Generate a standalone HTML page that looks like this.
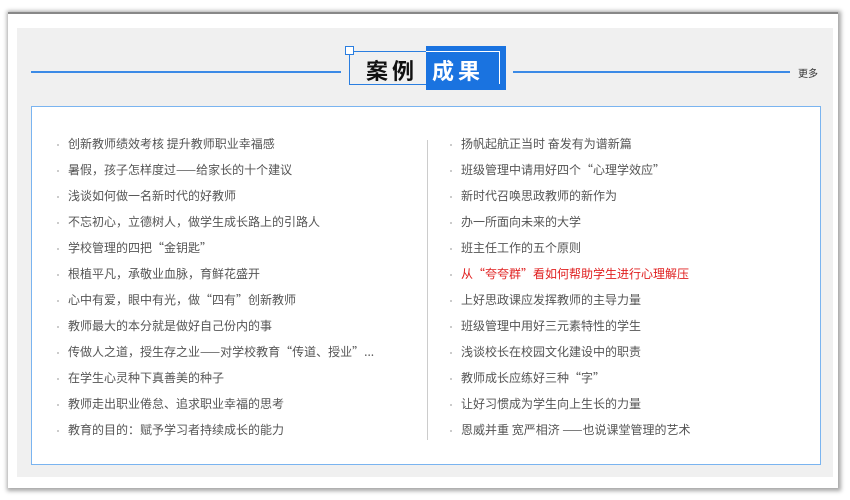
<!DOCTYPE html>
<html><head><meta charset="utf-8"><style>
body{margin:0;width:850px;height:500px;background:#fff;position:relative;overflow:hidden;font-family:"Liberation Sans","Noto Sans CJK SC",sans-serif}
.frame{position:absolute;left:8px;top:12px;width:830px;height:474px;background:#fff;box-shadow:1px 1px 4px 2px rgba(0,0,0,.35);border-top:2px solid #888}
.gray{position:absolute;left:17px;top:28px;width:816px;height:449px;background:#f0f0f0}
.line{position:absolute;height:2px;background:#3b8ae6;top:71px}
.box{position:absolute;left:31px;top:106px;width:788px;height:357px;background:#fff;border:1px solid #7ab4f0}
.div{position:absolute;left:427px;top:140px;width:1px;height:300px;background:#ccc}
.col{position:absolute;top:131px;font-size:12px;color:#555;line-height:26px;font-family:"Noto Sans CJK SC",sans-serif}
.col div{position:relative;white-space:nowrap}
.col div:before{content:"";position:absolute;left:-11px;top:13px;width:2px;height:2px;background:#ccc}
.red{color:#e02020}
</style></head><body>
<div class="frame"></div>
<div class="gray"></div>
<div class="line" style="left:31px;width:310px"></div>
<div class="line" style="left:513px;width:277px"></div>
<div style="position:absolute;left:798px;top:65px;font-size:10px;color:#333">更多</div>
<div style="position:absolute;left:349px;top:51px;width:154px;height:34px;border:1px solid #2a7ee0;box-sizing:border-box"></div>
<div style="position:absolute;left:345px;top:46px;width:7px;height:7px;border:1px solid #2a7ee0;background:#fff"></div>
<div style="position:absolute;left:426px;top:46px;width:80px;height:44px;background:#1a73e0"></div>
<div style="position:absolute;left:499px;top:51px;width:1px;height:33px;background:#fff"></div>
<div style="position:absolute;left:426px;top:51px;width:74px;height:1px;background:#fff"></div>
<div style="position:absolute;left:366px;top:54px;font-size:22px;font-weight:bold;color:#111;letter-spacing:4px">案例</div>
<div style="position:absolute;left:432px;top:54px;font-size:22px;font-weight:bold;color:#fff;letter-spacing:4px">成果</div>
<div class="box"></div>
<div class="div"></div>
<div class="col" style="left:68px">
<div>创新教师绩效考核 提升教师职业幸福感</div>
<div>暑假，孩子怎样度过——给家长的十个建议</div>
<div>浅谈如何做一名新时代的好教师</div>
<div>不忘初心，立德树人，做学生成长路上的引路人</div>
<div>学校管理的四把“金钥匙”</div>
<div>根植平凡，承敬业血脉，育鲜花盛开</div>
<div>心中有爱，眼中有光，做“四有”创新教师</div>
<div>教师最大的本分就是做好自己份内的事</div>
<div>传做人之道，授生存之业——对学校教育“传道、授业”...</div>
<div>在学生心灵种下真善美的种子</div>
<div>教师走出职业倦怠、追求职业幸福的思考</div>
<div>教育的目的：赋予学习者持续成长的能力</div>
</div>
<div class="col" style="left:461px">
<div>扬帆起航正当时 奋发有为谱新篇</div>
<div>班级管理中请用好四个“心理学效应”</div>
<div>新时代召唤思政教师的新作为</div>
<div>办一所面向未来的大学</div>
<div>班主任工作的五个原则</div>
<div class="red">从“夸夸群”看如何帮助学生进行心理解压</div>
<div>上好思政课应发挥教师的主导力量</div>
<div>班级管理中用好三元素特性的学生</div>
<div>浅谈校长在校园文化建设中的职责</div>
<div>教师成长应练好三种“字”</div>
<div>让好习惯成为学生向上生长的力量</div>
<div>恩威并重 宽严相济 ——也说课堂管理的艺术</div>
</div>
</body></html>
